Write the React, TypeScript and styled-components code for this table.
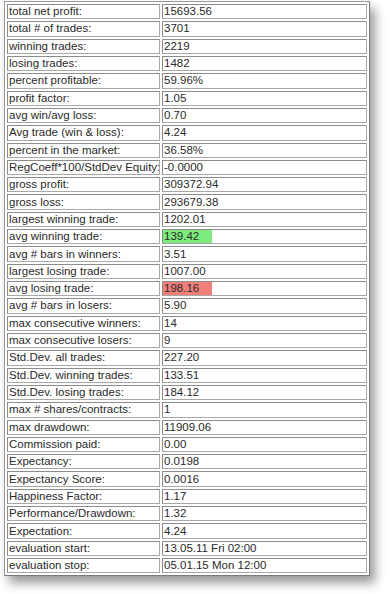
import React from "react";
import styled, { createGlobalStyle } from "styled-components";

const GlobalStyle = createGlobalStyle`
  body {
    margin: 0;
    background: #ffffff;
    font-family: "Liberation Sans", Arial, sans-serif;
  }
`;

const Page = styled.div`
  width: 390px;
  height: 594px;
  padding: 1px 0 0 4px;
  box-sizing: border-box;
  background: #ffffff;
`;

const Table = styled.table`
  border-collapse: separate;
  border-spacing: 2px;
  border: 1px solid #9a9a9a;
  border-right-color: #7a7a7a;
  border-bottom-color: #7a7a7a;
  table-layout: fixed;
  width: 366px;
  box-shadow: 5px 7px 10px rgba(0, 0, 0, 0.4);
  background: #ffffff;
`;

const Cell = styled.td<{ $wide?: boolean }>`
  box-sizing: border-box;
  width: ${(p) => (p.$wide ? "205px" : "153px")};
  height: 15.32px;
  padding: 0 1px;
  border: 1px solid #a8a8a8;
  border-top-color: #8c8c8c;
  border-left-color: #8c8c8c;
  font-size: 11.5px;
  line-height: 13px;
  color: #2a2a2a;
  white-space: nowrap;
  overflow: hidden;
  vertical-align: middle;
`;

const Mark = styled.span<{ $tone: "good" | "bad" }>`
  display: block;
  width: 48px;
  margin-left: -1px;
  padding-left: 1px;
  height: 13.32px;
  background: ${(p) => (p.$tone === "good" ? "#7cec7c" : "#f08079")};
`;

type Row = [string, string, ("good" | "bad")?];

const rows: Row[] = [
  ["total net profit:", "15693.56"],
  ["total # of trades:", "3701"],
  ["winning trades:", "2219"],
  ["losing trades:", "1482"],
  ["percent profitable:", "59.96%"],
  ["profit factor:", "1.05"],
  ["avg win/avg loss:", "0.70"],
  ["Avg trade (win & loss):", "4.24"],
  ["percent in the market:", "36.58%"],
  ["RegCoeff*100/StdDev Equity:", "-0.0000"],
  ["gross profit:", "309372.94"],
  ["gross loss:", "293679.38"],
  ["largest winning trade:", "1202.01"],
  ["avg winning trade:", "139.42", "good"],
  ["avg # bars in winners:", "3.51"],
  ["largest losing trade:", "1007.00"],
  ["avg losing trade:", "198.16", "bad"],
  ["avg # bars in losers:", "5.90"],
  ["max consecutive winners:", "14"],
  ["max consecutive losers:", "9"],
  ["Std.Dev. all trades:", "227.20"],
  ["Std.Dev. winning trades:", "133.51"],
  ["Std.Dev. losing trades:", "184.12"],
  ["max # shares/contracts:", "1"],
  ["max drawdown:", "11909.06"],
  ["Commission paid:", "0.00"],
  ["Expectancy:", "0.0198"],
  ["Expectancy Score:", "0.0016"],
  ["Happiness Factor:", "1.17"],
  ["Performance/Drawdown:", "1.32"],
  ["Expectation:", "4.24"],
  ["evaluation start:", "13.05.11 Fri 02:00"],
  ["evaluation stop:", "05.01.15 Mon 12:00"],
];

const App: React.FC = () => {
  return (
    <Page>
      <GlobalStyle />
      <Table>
        <tbody>
          {rows.map(([label, value, tone]) => (
            <tr key={label}>
              <Cell>{label}</Cell>
              <Cell $wide>{tone ? <Mark $tone={tone}>{value}</Mark> : value}</Cell>
            </tr>
          ))}
        </tbody>
      </Table>
    </Page>
  );
};

export default App;
